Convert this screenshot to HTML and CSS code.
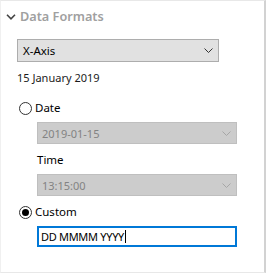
FILE: index.html
```html
<!DOCTYPE html>
<html>
<head>
<meta charset="utf-8">
<link rel="stylesheet" href="styles.css">
</head>
<body>
<div class="panel">
  <div class="header">
    <svg class="chev" width="10" height="6" viewBox="0 0 10 6"><path d="M1 0.8 L5 4.8 L9 0.8" fill="none" stroke="#444" stroke-width="1.6"/></svg>
    <span class="title">Data Formats</span>
  </div>
  <div class="content">
    <div class="select axis">
      <span>X-Axis</span>
      <svg class="arrow" width="9" height="5" viewBox="0 0 9 5"><path d="M0.5 0.5 L4.5 4.5 L8.5 0.5" fill="none" stroke="#333" stroke-width="1"/></svg>
    </div>
    <div class="preview">15 January 2019</div>
    <div class="radio-row first">
      <span class="radio"></span><span class="label">Date</span>
    </div>
    <div class="nested">
      <div class="select disabled">
        <span class="num">2019-01-15</span>
        <svg class="arrow" width="9" height="5" viewBox="0 0 9 5"><path d="M0.5 0.5 L4.5 4.5 L8.5 0.5" fill="none" stroke="#a6a6a6" stroke-width="1"/></svg>
      </div>
      <div class="sublabel">Time</div>
      <div class="select disabled">
        <span class="num">13:15:00</span>
        <svg class="arrow" width="9" height="5" viewBox="0 0 9 5"><path d="M0.5 0.5 L4.5 4.5 L8.5 0.5" fill="none" stroke="#a6a6a6" stroke-width="1"/></svg>
      </div>
    </div>
    <div class="radio-row">
      <span class="radio checked"></span><span class="label">Custom</span>
    </div>
    <div class="nested">
      <div class="input"><span>DD MMMM YYYY</span><span class="caret"></span></div>
    </div>
  </div>
</div>
</body>
</html>
```
FILE: styles.css
```css
html, body {
  margin: 0;
  padding: 0;
  background: #ffffff;
}
body {
  font-family: "Noto Sans", "Open Sans", sans-serif;
  font-size: 11.5px;
  color: #1a1a1a;
}
.panel {
  box-sizing: border-box;
  width: 266px;
  height: 273px;
  border-top: 1px solid #e8e8e8;
  border-left: 1px solid #f0f0f0;
  border-bottom: 1px solid #e8e8e8;
  border-right: 2px solid #d2d2d2;
  background: #ffffff;
}
.header {
  height: 30px;
  display: flex;
  align-items: center;
  padding-left: 5px;
}
.chev {
  display: block;
  margin-top: 1px;
}
.title {
  margin-left: 4px;
  font-weight: 600;
  font-size: 12.7px;
  color: #a0a0a0;
}
.content {
  padding-left: 16px;
  display: flex;
  flex-direction: column;
}
.select {
  box-sizing: border-box;
  height: 22px;
  width: 200px;
  display: flex;
  align-items: center;
  justify-content: space-between;
  padding: 0 5px 0 4px;
  border: 1px solid #bfbfbf;
  background: #cccccc;
  color: #838383;
}
.select.axis {
  margin-top: 8px;
  width: 202px;
  height: 23px;
  background: #e1e1e1;
  border-color: #adadad;
  color: #000;
  padding-left: 5px;
}
.num {
  font-size: 11px;
}
.arrow {
  display: block;
}
.preview {
  margin-top: 8px;
  height: 16px;
  line-height: 16px;
  font-size: 11px;
  color: #1a1a1a;
}
.radio-row {
  margin-top: 8px;
  height: 16px;
  display: flex;
  align-items: center;
  padding-left: 2px;
}
.radio-row.first {
  margin-top: 14px;
}
.radio {
  box-sizing: border-box;
  width: 13px;
  height: 13px;
  border: 1px solid #333;
  border-radius: 50%;
  display: flex;
  align-items: center;
  justify-content: center;
}
.radio.checked::after {
  content: "";
  width: 7px;
  height: 7px;
  border-radius: 50%;
  background: #000;
}
.label {
  margin-left: 3px;
  line-height: 16px;
  color: #000;
}
.nested {
  padding-left: 20px;
  margin-top: 6px;
  display: flex;
  flex-direction: column;
}
.sublabel {
  margin-top: 8px;
  margin-bottom: 6px;
  height: 16px;
  line-height: 16px;
  color: #000;
}
.input {
  box-sizing: border-box;
  width: 200px;
  height: 21px;
  border: 2px solid #0078d7;
  display: flex;
  align-items: center;
  padding-left: 2px;
  font-size: 11px;
  letter-spacing: -0.3px;
  color: #000;
}
.caret {
  width: 1px;
  height: 13px;
  background: #000;
  margin-left: 1px;
}
```
